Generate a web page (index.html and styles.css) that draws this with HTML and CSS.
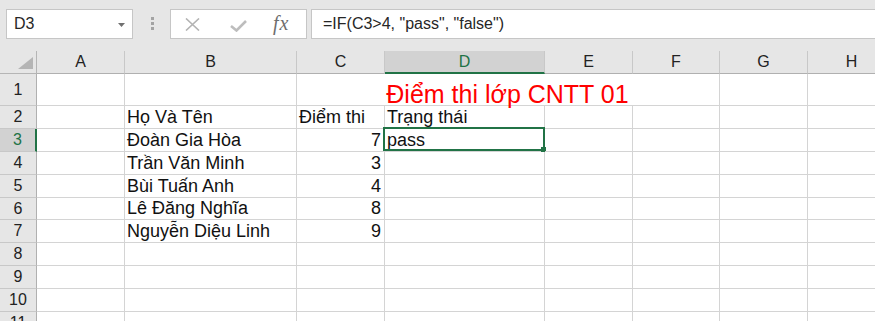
FILE: index.html
```html
<!DOCTYPE html>
<html lang="vi">
<head>
<meta charset="utf-8">
<title>Excel</title>
<link rel="stylesheet" href="styles.css">
</head>
<body>
<div class="toolbar">
  <div class="namebox"><span>D3</span><svg class="caret" width="7" height="4" viewBox="0 0 7 4"><polygon points="0,0 7,0 3.5,4" fill="#707070"/></svg></div>
  <div class="dots"><i></i><i></i><i></i></div>
  <div class="iconbox">
    <svg class="ic-x" width="15" height="13" viewBox="0 0 15 13"><path d="M1 0.5 L14 12.5 M14 0.5 L1 12.5" stroke="#b3b3b3" stroke-width="1.6" fill="none"/></svg>
    <svg class="ic-ok" width="17" height="12" viewBox="0 0 17 12"><path d="M1 6 L6.5 10.5 L16 1" stroke="#bdbdbd" stroke-width="2.6" fill="none"/></svg>
    <span class="fx">fx</span>
  </div>
  <div class="formula">=IF(C3&gt;4, "pass", "false")</div>
</div>
<div class="sheet">
  <div class="corner"><svg width="15" height="12" viewBox="0 0 15 12"><polygon points="15,0 15,12 0,12" fill="#b5b5b5"/></svg></div>
  <div class="ch">A</div><div class="ch">B</div><div class="ch">C</div><div class="ch sel">D</div><div class="ch">E</div><div class="ch">F</div><div class="ch">G</div><div class="ch">H</div>

  <div class="rh">1</div><div class="c"></div><div class="c"></div><div class="c title">Điểm thi lớp CNTT 01</div><div class="c"></div><div class="c"></div>

  <div class="rh">2</div><div class="c"></div><div class="c">Họ Và Tên</div><div class="c">Điểm thi</div><div class="c">Trạng thái</div><div class="c"></div><div class="c"></div><div class="c"></div><div class="c"></div>

  <div class="rh sel">3</div><div class="c"></div><div class="c">Đoàn Gia Hòa</div><div class="c num">7</div><div class="c active">pass<span class="selbox"><span class="handle"></span></span></div><div class="c"></div><div class="c"></div><div class="c"></div><div class="c"></div>

  <div class="rh">4</div><div class="c"></div><div class="c">Trần Văn Minh</div><div class="c num">3</div><div class="c"></div><div class="c"></div><div class="c"></div><div class="c"></div><div class="c"></div>

  <div class="rh">5</div><div class="c"></div><div class="c">Bùi Tuấn Anh</div><div class="c num">4</div><div class="c"></div><div class="c"></div><div class="c"></div><div class="c"></div><div class="c"></div>

  <div class="rh">6</div><div class="c"></div><div class="c">Lê Đăng Nghĩa</div><div class="c num">8</div><div class="c"></div><div class="c"></div><div class="c"></div><div class="c"></div><div class="c"></div>

  <div class="rh">7</div><div class="c"></div><div class="c">Nguyễn Diệu Linh</div><div class="c num">9</div><div class="c"></div><div class="c"></div><div class="c"></div><div class="c"></div><div class="c"></div>

  <div class="rh">8</div><div class="c"></div><div class="c"></div><div class="c"></div><div class="c"></div><div class="c"></div><div class="c"></div><div class="c"></div><div class="c"></div>

  <div class="rh">9</div><div class="c"></div><div class="c"></div><div class="c"></div><div class="c"></div><div class="c"></div><div class="c"></div><div class="c"></div><div class="c"></div>

  <div class="rh">10</div><div class="c"></div><div class="c"></div><div class="c"></div><div class="c"></div><div class="c"></div><div class="c"></div><div class="c"></div><div class="c"></div>

  <div class="rh">11</div><div class="c"></div><div class="c"></div><div class="c"></div><div class="c"></div><div class="c"></div><div class="c"></div><div class="c"></div><div class="c"></div>
</div>
</body>
</html>
```
FILE: styles.css
```css
* { box-sizing: border-box; }
html, body {
  margin: 0;
  padding: 0;
  background: #fff;
  overflow: hidden;
}
body {
  width: 875px;
  height: 321px;
  font-family: "Liberation Sans", Arial, sans-serif;
  color: #1f1f1f;
}

/* ---------- formula bar ---------- */
.toolbar {
  display: flex;
  align-items: flex-start;
  height: 51px;
  padding: 9px 0 0 6px;
  background: #e6e6e6;
  overflow: hidden;
  white-space: nowrap;
}
.namebox {
  flex: none;
  width: 127px;
  height: 30px;
  border: 1px solid #c6c6c6;
  background: #fff;
  display: flex;
  align-items: center;
  justify-content: space-between;
  padding: 0 7px;
  font-size: 16px;
  color: #262626;
}
.caret { margin-top: 1px; }
.dots {
  flex: none;
  margin: 8px 0 0 18px;
  width: 3px;
  display: flex;
  flex-direction: column;
  gap: 2px;
}
.dots i {
  display: block;
  width: 3px;
  height: 3px;
  background: #a3a3a3;
}
.iconbox {
  flex: none;
  margin-left: 16px;
  width: 137px;
  height: 30px;
  border: 1px solid #c6c6c6;
  background: #fff;
  display: flex;
  align-items: flex-start;
  padding-left: 14px;
}
.ic-x { margin-top: 8px; }
.ic-ok { margin: 10px 0 0 30px; }
.fx {
  margin: 3px 0 0 26px;
  font-family: "Liberation Serif", "Times New Roman", serif;
  font-style: italic;
  font-size: 20px;
  line-height: 20px;
  letter-spacing: 1px;
  color: #6e6e6e;
}
.formula {
  flex: none;
  margin-left: 4px;
  width: 620px;
  height: 30px;
  border: 1px solid #c6c6c6;
  background: #fff;
  display: flex;
  align-items: center;
  padding-left: 11px;
  font-size: 16px;
  color: #262626;
}

/* ---------- sheet ---------- */
.sheet {
  display: grid;
  grid-template-columns: 37px 88px 172px 88px 160px 88px 87px 88px 88px;
  grid-template-rows: 23px 32px 23px 23px 23px 23px 22px 23px 23px 23px 23px 23px;
  width: 899px;
}
.corner {
  background: #e6e6e6;
  border-right: 1px solid #b5b5b5;
  border-bottom: 1px solid #b5b5b5;
  display: flex;
  align-items: flex-end;
  justify-content: flex-end;
  padding: 0 3px 4px 0;
}
.corner svg { display: block; }
.ch {
  background: #e6e6e6;
  border-right: 1px solid #c8c8c8;
  border-bottom: 1px solid #b0b0b0;
  display: flex;
  align-items: center;
  justify-content: center;
  font-size: 16px;
  line-height: 22px;
  color: #222;
}
.ch.sel {
  background: #d2d2d2;
  color: #217346;
  border-bottom: 2px solid #217346;
}
.rh {
  background: #e6e6e6;
  border-right: 1px solid #b0b0b0;
  border-bottom: 1px solid #c8c8c8;
  display: flex;
  align-items: center;
  justify-content: center;
  font-size: 16px;
  color: #222;
}
.rh.sel {
  background: #d2d2d2;
  color: #217346;
  border-right: 2px solid #217346;
}
.c {
  position: relative;
  border-right: 1px solid #d4d4d4;
  border-bottom: 1px solid #d4d4d4;
  display: flex;
  align-items: flex-end;
  padding: 0 3px 0 2px;
  font-size: 18px;
  line-height: 22px;
  white-space: nowrap;
  color: #111;
}
.c.num { justify-content: flex-end; }
.c.title {
  grid-column: span 4;
  justify-content: center;
  font-size: 25px;
  line-height: 22px;
  color: #f00;
}
.selbox {
  position: absolute;
  left: -2px;
  top: -2px;
  right: -1px;
  bottom: 0;
  border: 2px solid #217346;
}
.handle {
  position: absolute;
  right: -3px;
  bottom: -3px;
  width: 5px;
  height: 5px;
  background: #217346;
}
```
